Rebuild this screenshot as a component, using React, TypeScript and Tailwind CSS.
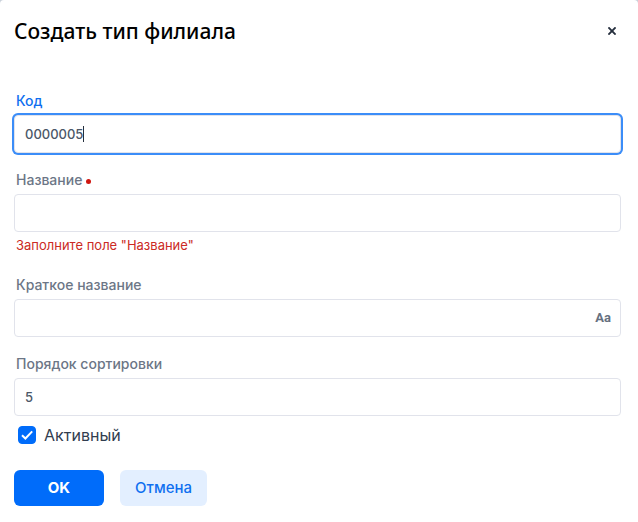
import { useState } from "react";
import type { ReactNode } from "react";

const inputBase =
  "block h-[38px] w-full rounded-[4px] border border-[#e1e3eb] bg-white px-[10px] text-[13px] leading-5 font-medium text-[#4b5768] outline-none";

type FieldProps = {
  id: string;
  label: string;
  value: string;
  onChange: (value: string) => void;
  active?: boolean;
  required?: boolean;
  error?: string;
  children?: ReactNode;
};

function Field({ id, label, value, onChange, active, required, error, children }: FieldProps) {
  return (
    <div>
      <label
        htmlFor={id}
        className={`mb-1 flex items-center gap-1 pl-0.5 text-[14px] leading-5 font-medium ${
          active ? "text-[#0f6ff0]" : "text-[#6c7686]"
        }`}
      >
        {label}
        {required && <span className="mt-0.5 size-[5px] rounded-full bg-[#cf1610]" />}
      </label>
      <div className="relative">
        <input
          id={id}
          type="text"
          value={value}
          required={required}
          onChange={(e) => onChange(e.target.value)}
          className={`${inputBase} ${active ? "caret-transparent ring-2 ring-[#3b8df8]" : ""}`}
        />
        {children}
      </div>
      {error && <p className="py-[3px] pl-0.5 text-[13px] leading-5 text-[#cb2a24]">{error}</p>}
    </div>
  );
}

export default function App() {
  const [code, setCode] = useState("0000005");
  const [name, setName] = useState("");
  const [shortName, setShortName] = useState("");
  const [order, setOrder] = useState("5");
  const [enabled, setEnabled] = useState(true);

  return (
    <div className="bg-[#c9d1da]">
      <main className="min-h-screen rounded-t-[4px] bg-white pr-[17px] pb-4 pl-[14px] font-['Inter',sans-serif]">
        <header className="flex h-[62px] items-center justify-between">
          <h1 className="font-['Noto_Sans','Open_Sans',sans-serif] text-[21px] leading-7 font-medium text-black">
            Создать тип филиала
          </h1>
          <button type="button" aria-label="Закрыть" className="flex size-[18px] items-center justify-center">
            <svg viewBox="0 0 8 8" className="size-2" fill="none" stroke="#252f3d" strokeWidth="1.9">
              <path d="M.4.4l7.2 7.2M7.6.4l-7.2 7.2" />
            </svg>
          </button>
        </header>

        <form className="flex flex-col gap-[17px] pt-[29px]" onSubmit={(e) => e.preventDefault()}>
          <Field id="code" label="Код" value={code} onChange={setCode} active>
            <span className="absolute top-[11px] left-[69px] h-4 w-px bg-[#252f3d]" />
          </Field>
          <Field
            id="name"
            label="Название"
            value={name}
            onChange={setName}
            required
            error={'Заполните поле "Название"'}
          />
          <Field id="short-name" label="Краткое название" value={shortName} onChange={setShortName}>
            <span className="absolute inset-y-0 right-[10px] flex items-center font-['Roboto',sans-serif] text-[13px] font-bold text-[#667080]">
              Aa
            </span>
          </Field>
          <div>
            <Field id="order" label="Порядок сортировки" value={order} onChange={setOrder} />
            <label className="mt-[7px] flex items-center gap-2 pl-1 text-[16px] leading-6 text-[#313d4f]">
              <span className="relative size-[18px]">
                <input
                  type="checkbox"
                  checked={enabled}
                  onChange={(e) => setEnabled(e.target.checked)}
                  className="peer block size-[18px] appearance-none rounded-[4px] border border-[#c5cbd5] checked:border-[#006cfa] checked:bg-[#006cfa]"
                />
                <svg
                  viewBox="0 0 18 18"
                  className="pointer-events-none absolute inset-0 hidden peer-checked:block"
                  fill="none"
                  stroke="white"
                  strokeWidth="2"
                >
                  <path d="M4 9.2l3.4 3.3L14.2 5.4" />
                </svg>
              </span>
              Активный
            </label>
          </div>
          <div className="mt-[6px] flex gap-4 text-[15px] leading-5">
            <button type="submit" className="h-9 w-[90px] rounded-[6px] bg-[#006cfa] font-bold text-white">
              OK
            </button>
            <button type="button" className="h-9 rounded-[6px] bg-[#e3efff] px-[15px] font-medium text-[#0f6ff0]">
              Отмена
            </button>
          </div>
        </form>
      </main>
    </div>
  );
}
